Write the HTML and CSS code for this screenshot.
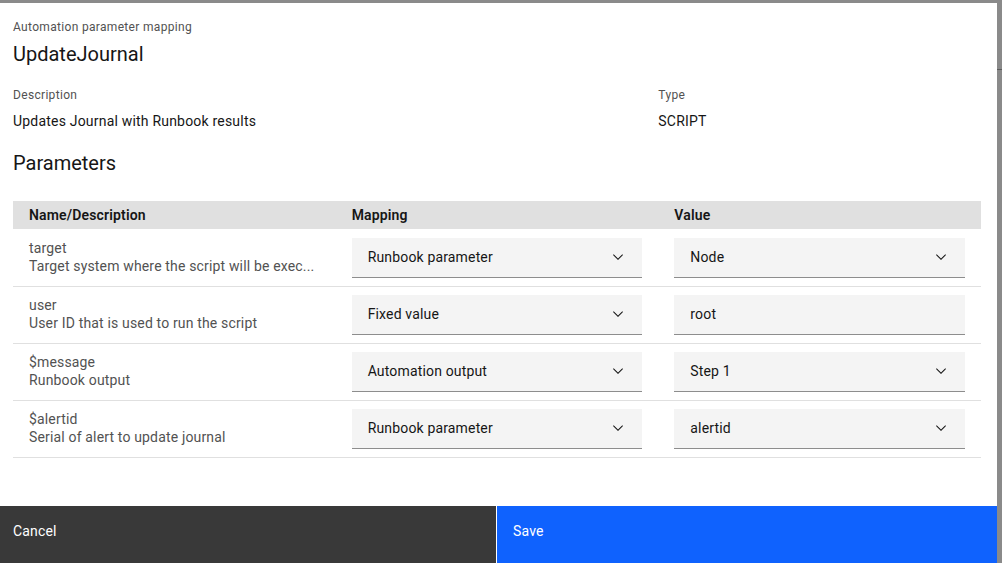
FILE: index.html
```html
<!DOCTYPE html>
<html lang="en">
<head>
<meta charset="utf-8">
<title>Automation parameter mapping</title>
<link rel="stylesheet" href="styles.css">
</head>
<body>
<div class="modal">
  <div class="modal-body">
    <header class="modal-header">
      <p class="modal-label">Automation parameter mapping</p>
      <h2 class="modal-title">UpdateJournal</h2>
    </header>
    <div class="meta">
      <div class="meta-item">
        <div class="meta-label">Description</div>
        <div class="meta-value">Updates Journal with Runbook results</div>
      </div>
      <div class="meta-item">
        <div class="meta-label">Type</div>
        <div class="meta-value">SCRIPT</div>
      </div>
    </div>
    <h3 class="section-title">Parameters</h3>
    <div class="table">
      <div class="thead">
        <div class="th">Name/Description</div>
        <div class="th">Mapping</div>
        <div class="th">Value</div>
      </div>
      <div class="tr">
        <div class="td td-name"><div class="p-name">target</div><div class="p-desc">Target system where the script will be exec...</div></div>
        <div class="td"><div class="field select"><span>Runbook parameter</span><svg class="chev" viewBox="0 0 16 16" width="16" height="16"><path d="M8 11L3 6 3.7 5.3 8 9.6 12.3 5.3 13 6z"/></svg></div></div>
        <div class="td"><div class="field select"><span>Node</span><svg class="chev" viewBox="0 0 16 16" width="16" height="16"><path d="M8 11L3 6 3.7 5.3 8 9.6 12.3 5.3 13 6z"/></svg></div></div>
      </div>
      <div class="tr">
        <div class="td td-name"><div class="p-name">user</div><div class="p-desc">User ID that is used to run the script</div></div>
        <div class="td"><div class="field select"><span>Fixed value</span><svg class="chev" viewBox="0 0 16 16" width="16" height="16"><path d="M8 11L3 6 3.7 5.3 8 9.6 12.3 5.3 13 6z"/></svg></div></div>
        <div class="td"><div class="field"><span>root</span></div></div>
      </div>
      <div class="tr">
        <div class="td td-name"><div class="p-name">$message</div><div class="p-desc">Runbook output</div></div>
        <div class="td"><div class="field select"><span>Automation output</span><svg class="chev" viewBox="0 0 16 16" width="16" height="16"><path d="M8 11L3 6 3.7 5.3 8 9.6 12.3 5.3 13 6z"/></svg></div></div>
        <div class="td"><div class="field select"><span>Step 1</span><svg class="chev" viewBox="0 0 16 16" width="16" height="16"><path d="M8 11L3 6 3.7 5.3 8 9.6 12.3 5.3 13 6z"/></svg></div></div>
      </div>
      <div class="tr">
        <div class="td td-name"><div class="p-name">$alertid</div><div class="p-desc">Serial of alert to update journal</div></div>
        <div class="td"><div class="field select"><span>Runbook parameter</span><svg class="chev" viewBox="0 0 16 16" width="16" height="16"><path d="M8 11L3 6 3.7 5.3 8 9.6 12.3 5.3 13 6z"/></svg></div></div>
        <div class="td"><div class="field select"><span>alertid</span><svg class="chev" viewBox="0 0 16 16" width="16" height="16"><path d="M8 11L3 6 3.7 5.3 8 9.6 12.3 5.3 13 6z"/></svg></div></div>
      </div>
    </div>
  </div>
  <footer class="modal-footer">
    <button class="btn btn-secondary">Cancel</button>
    <button class="btn btn-primary">Save</button>
  </footer>
</div>
</body>
</html>
```

FILE: styles.css
```css
html, body {
  margin: 0;
  padding: 0;
  height: 100%;
  overflow: hidden;
}
body {
  background: #8a8a8a linear-gradient(to bottom, transparent 69px, #5c5c5c 69px, #5c5c5c 70px, transparent 70px);
  font-family: Roboto, "Noto Sans", sans-serif;
  color: #161616;
}
.modal {
  width: 997px;
  height: 560px;
  margin-top: 3px;
  background: #ffffff;
  display: flex;
  flex-direction: column;
}
.modal-body {
  flex: 1;
  padding: 16px 16px 0 13px;
}
.modal-label {
  margin: 0;
  font-size: 12px;
  line-height: 16px;
  color: #525252;
  letter-spacing: 0.32px;
}
.modal-title {
  margin: 5px 0 0;
  font-size: 20px;
  line-height: 28px;
  font-weight: 400;
  color: #161616;
}
.meta {
  margin-top: 19px;
  display: grid;
  grid-template-columns: 2fr 1fr;
}
.meta-label {
  font-size: 12px;
  line-height: 16px;
  color: #525252;
  letter-spacing: 0.32px;
}
.meta-value {
  margin-top: 9px;
  font-size: 14px;
  line-height: 18px;
  color: #161616;
  letter-spacing: 0.2px;
}
.section-title {
  margin: 19px 0 0;
  font-size: 20px;
  line-height: 28px;
  font-weight: 400;
}
.table {
  margin-top: 24px;
}
.thead, .tr {
  display: grid;
  grid-template-columns: repeat(3, 1fr);
}
.thead {
  background: #e0e0e0;
  height: 28px;
  border-bottom: 1px solid #ffffff;
}
.th {
  padding: 0 16px;
  font-size: 14px;
  line-height: 28px;
  font-weight: 600;
  color: #161616;
  letter-spacing: 0.16px;
}
.tr {
  height: 56px;
  border-bottom: 1px solid #e0e0e0;
}
.td {
  padding: 8px 16px;
  font-size: 14px;
  line-height: 18px;
  letter-spacing: 0.16px;
}
.td-name {
  padding-top: 9px;
  color: #525252;
}
.p-name, .p-desc {
  white-space: nowrap;
}
.field {
  box-sizing: border-box;
  height: 40px;
  background: #f4f4f4;
  border-bottom: 1px solid #8d8d8d;
  display: flex;
  align-items: center;
  justify-content: space-between;
  padding: 0 16px 1px;
  color: #161616;
}
.chev {
  fill: #161616;
  flex: none;
}
.modal-footer {
  display: grid;
  grid-template-columns: 496px 1fr;
  column-gap: 1px;
  height: 64px;
  flex: none;
  margin-bottom: -7px;
}
.btn {
  border: 0;
  margin: 0;
  text-align: left;
  font-family: inherit;
  font-size: 14px;
  line-height: 18px;
  letter-spacing: 0.16px;
  color: #ffffff;
  padding: 16px 16px 30px;
  display: flex;
  align-items: flex-start;
}
.btn-secondary {
  background: #393939;
  padding-left: 13px;
}
.btn-primary {
  background: #0f62fe;
}
```
